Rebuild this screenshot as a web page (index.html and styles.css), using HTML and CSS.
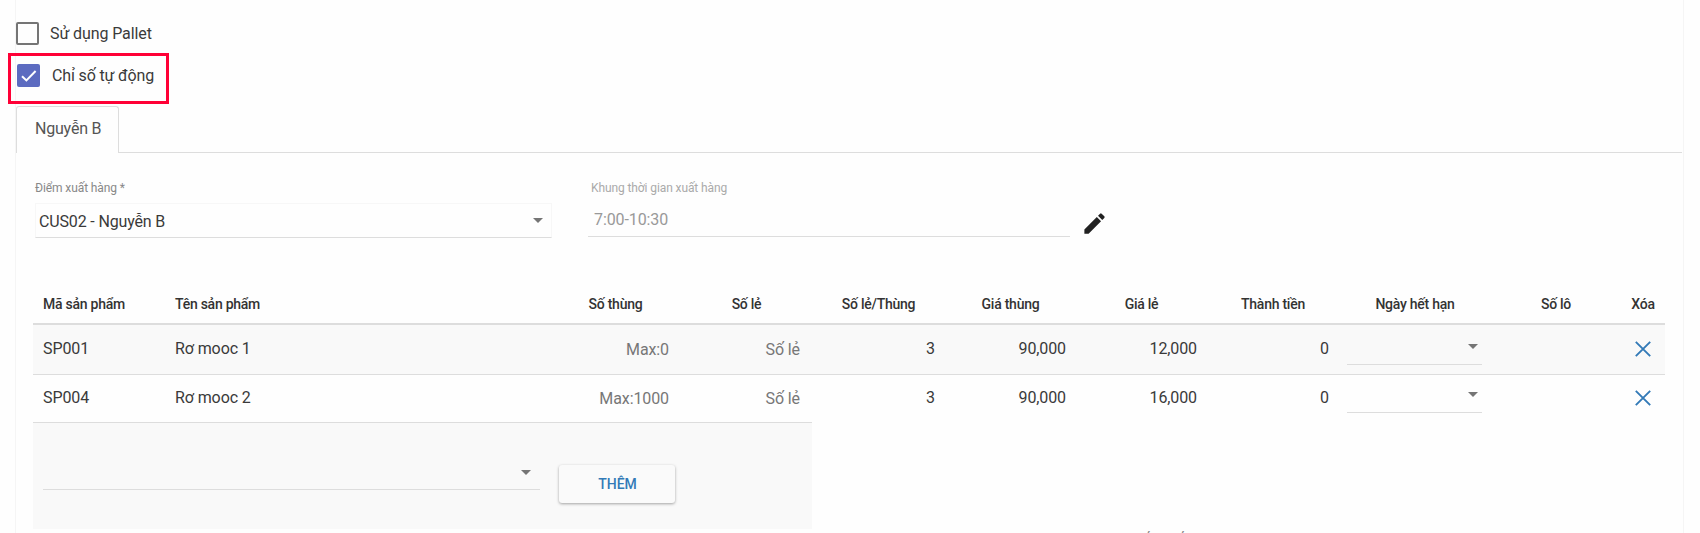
FILE: index.html
```
<!DOCTYPE html>
<html lang="vi">
<head>
<meta charset="utf-8">
<title>Xuất hàng</title>
<link rel="stylesheet" href="styles.css">
</head>
<body>
<main class="card">
  <div class="option"><span class="box"></span><span>Sử dụng Pallet</span></div>
  <div class="highlight">
    <div class="option option-on">
      <span class="box box-on"><svg width="23" height="23" viewBox="0 0 23 23"><path d="M5 12.2l4.4 4.2L18.6 7" fill="none" stroke="#fff" stroke-width="2"/></svg></span><span>Chỉ số tự động</span>
    </div>
  </div>
  <nav class="tabs"><div class="tab">Nguyễn B</div><div class="tab-rest"></div></nav>

  <section class="fields">
    <div class="field field-point">
      <label>Điểm xuất hàng *</label>
      <div class="select">CUS02 - Nguyễn B<i class="arrow"></i></div>
    </div>
    <div class="field field-time">
      <label>Khung thời gian xuất hàng</label>
      <div class="input">7:00-10:30</div>
    </div>
    <svg class="pencil" width="27" height="27" viewBox="0 0 24 24"><path fill="#212121" d="M3 17.25V21h3.75L17.81 9.94l-3.75-3.75L3 17.25zM20.71 7.04a1 1 0 0 0 0-1.41l-2.34-2.34a1 1 0 0 0-1.41 0l-1.83 1.83 3.75 3.75 1.83-1.83z"/></svg>
  </section>

  <section class="table">
    <div class="row head">
      <span class="left">Mã sản phẩm</span><span class="left">Tên sản phẩm</span><span>Số thùng</span><span>Số lẻ</span><span>Số lẻ/Thùng</span><span>Giá thùng</span><span>Giá lẻ</span><span>Thành tiền</span><span>Ngày hết hạn</span><span>Số lô</span><span>Xóa</span>
    </div>
    <div class="row item odd">
      <span class="left">SP001</span><span class="left">Rơ mooc 1</span><span class="hint">Max:0</span><span class="hint">Số lẻ</span><span class="num">3</span><span class="num">90,000</span><span class="num">12,000</span><span class="num">0</span>
      <div class="date"><i class="arrow"></i></div><span></span>
      <svg class="remove" width="16" height="16" viewBox="0 0 16 16"><path d="M.8.8l14.4 14.4M15.2.8L.8 15.2" stroke="#337ab7" stroke-width="1.9"/></svg>
    </div>
    <div class="row item">
      <span class="left">SP004</span><span class="left">Rơ mooc 2</span><span class="hint">Max:1000</span><span class="hint">Số lẻ</span><span class="num">3</span><span class="num">90,000</span><span class="num">16,000</span><span class="num">0</span>
      <div class="date"><i class="arrow"></i></div><span></span>
      <svg class="remove" width="16" height="16" viewBox="0 0 16 16"><path d="M.8.8l14.4 14.4M15.2.8L.8 15.2" stroke="#337ab7" stroke-width="1.9"/></svg>
    </div>
    <div class="add">
      <div class="picker"><i class="arrow"></i></div>
      <button class="button">THÊM</button>
    </div>
  </section>
  <footer class="total">Số phiếu</footer>
</main>
</body>
</html>
```
FILE: styles.css
```
* { box-sizing: border-box; }
body {
  margin: 0;
  height: 533px;
  overflow: hidden;
  background: #fefefe;
  color: #3a3a3a;
  font: 16px/20px Roboto, sans-serif;
  letter-spacing: -0.1px;
}
.card {
  width: 1669px;
  height: 533px;
  margin-left: 15px;
  padding-top: 22px;
  border: solid #f5f5f5;
  border-width: 0 1px;
}
.option { display: flex; align-items: center; gap: 11px; height: 23px; white-space: nowrap; }
.box { flex: none; width: 23px; height: 23px; border: 2px solid #757575; border-radius: 2px; }
.box-on { border: 0; background: #5c6bc0; }
.box svg { display: block; }
.highlight {
  width: 161px;
  height: 51px;
  margin: 8px 0 0 -8px;
  padding: 8px 0 0 6px;
  border: 3px solid #ff0036;
}
.option-on { gap: 12px; letter-spacing: -0.15px; }
.tabs { display: flex; height: 47px; margin-top: 2px; }
.tab {
  width: 103px;
  padding: 12px 0 0 18px;
  border: 1px solid #ddd;
  border-bottom: 0;
  border-radius: 3px 3px 0 0;
  color: #555;
  letter-spacing: -0.2px;
}
.tab-rest { width: 1563px; border-bottom: 1px solid #ddd; }
.fields { display: flex; height: 133px; padding: 27px 0 0 19px; }
.field label { display: block; height: 20px; line-height: 17px; font-size: 12px; color: #888; }
.field-point { width: 517px; }
.select {
  display: flex;
  align-items: center;
  justify-content: space-between;
  width: 517px;
  height: 35px;
  margin-top: 3px;
  padding: 2px 8px 0 3px;
  border: 1px solid #f7f7f7;
  border-bottom-color: #ddd;
  letter-spacing: -0.15px;
}
.select .arrow { margin-top: -2px; }
.arrow { width: 10px; height: 5px; background: #757575; clip-path: polygon(0 0, 100% 0, 50% 100%); }
.field-time { width: 482px; margin-left: 36px; }
.field-time label { padding-left: 3px; color: #aaa; }
.input {
  height: 37px;
  padding: 10px 0 0 6px;
  border-bottom: 1px solid #ddd;
  color: #999;
}
.pencil { margin: 30px 0 0 11px; }
.table { width: 1632px; margin-left: 17px; }
.row {
  display: grid;
  grid-template-columns: 132px 385px 131px 131px 133px 131px 131px 132px 152px 130px 44px;
}
.head {
  height: 39px;
  padding-top: 8px;
  border-bottom: 2px solid #ddd;
  color: #333;
  font-size: 14px;
  font-weight: 500;
  letter-spacing: -0.25px;
  text-align: center;
}
.left { padding-left: 10px; text-align: left; }
.item { height: 47px; padding-top: 13px; }
.odd { height: 50px; padding-top: 14px; background: #f9f9f9; border-bottom: 1px solid #ddd; }
.num { padding-right: 10px; text-align: right; }
.hint { padding: 1px 12px 0 0; color: #777; text-align: right; }
.date {
  display: flex;
  justify-content: flex-end;
  width: 135px;
  height: 26px;
  margin: 0 0 0 8px;
  padding: 5px 4px 0 0;
  border-bottom: 1px solid #ddd;
}
.item:not(.odd) .date { padding-top: 4px; height: 25px; }
.remove { margin: 2px 0 0 14px; }
.add {
  display: flex;
  width: 779px;
  height: 107px;
  padding: 0 0 0 10px;
  gap: 19px;
  background: #f9f9f9;
  border-top: 1px solid #ddd;
}
.picker {
  display: flex;
  justify-content: flex-end;
  width: 497px;
  height: 67px;
  padding: 47px 9px 0 0;
  border-bottom: 1px solid #ddd;
}
.button {
  width: 116px;
  height: 38px;
  margin-top: 42px;
  padding: 0 0 0 1px;
  border: 0;
  border-radius: 3px;
  background: #fafafa;
  box-shadow: 0 1px 3px rgba(0, 0, 0, .35);
  color: #337ab7;
  font: 500 14px/38px Roboto, sans-serif;
}
.total { margin: 1px 0 0 1115px; color: #888; }
```
